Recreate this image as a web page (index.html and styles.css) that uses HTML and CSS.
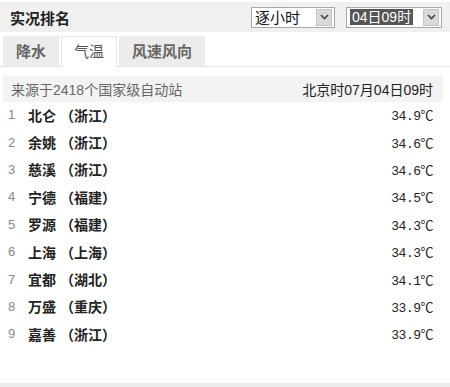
FILE: index.html
```html
<!DOCTYPE html>
<html lang="zh">
<head>
    <meta charset="UTF-8">
    <title>实况排名</title>
    <link rel="stylesheet" href="styles.css">
</head>
<body>
    <div class="rank">
        <div class="rankHead">
            <h3>实况排名</h3>
            <div class="selects">
                <div class="sel sel1"><span class="val">逐小时</span><span class="arrow"><svg width="9" height="6" viewBox="0 0 9 6"><path d="M1 1 L4.5 4.5 L8 1" fill="none" stroke="#444" stroke-width="1.6"/></svg></span></div>
                <div class="sel sel2"><span class="val"><em>04日09时</em></span><span class="arrow"><svg width="9" height="6" viewBox="0 0 9 6"><path d="M1 1 L4.5 4.5 L8 1" fill="none" stroke="#444" stroke-width="1.6"/></svg></span></div>
            </div>
        </div>
        <!-- 切换标签 -->
        <ul class="tabs">
            <li>降水</li>
            <li class="current">气温</li>
            <li>风速风向</li>
        </ul>
        <div class="source">
            <span>来源于2418个国家级自动站</span>
            <b>北京时07月04日09时</b>
        </div>
        <ol class="list">
            <li><i>1</i><span class="name">北仑 （浙江）</span><span class="num">34.9℃</span></li>
            <li><i>2</i><span class="name">余姚 （浙江）</span><span class="num">34.6℃</span></li>
            <li><i>3</i><span class="name">慈溪 （浙江）</span><span class="num">34.6℃</span></li>
            <li><i>4</i><span class="name">宁德 （福建）</span><span class="num">34.5℃</span></li>
            <li><i>5</i><span class="name">罗源 （福建）</span><span class="num">34.3℃</span></li>
            <li><i>6</i><span class="name">上海 （上海）</span><span class="num">34.3℃</span></li>
            <li><i>7</i><span class="name">宜都 （湖北）</span><span class="num">34.1℃</span></li>
            <li><i>8</i><span class="name">万盛 （重庆）</span><span class="num">33.9℃</span></li>
            <li><i>9</i><span class="name">嘉善 （浙江）</span><span class="num">33.9℃</span></li>
        </ol>
        <div class="foot"></div>
    </div>
</body>
</html>
```

FILE: styles.css
```css
*{
    margin:0;
    padding:0;
}
body{
    font-family:"Liberation Sans","Noto Sans CJK SC",sans-serif;
    font-size:13px;
    color:#222;
    background:#fff;
}
.rank{
    width:450px;
    height:387px;
    display:flex;
    flex-direction:column;
}
.rankHead{
    height:30px;
    margin-top:2px;
    background:#f0f0f0;
    display:flex;
    align-items:center;
    justify-content:space-between;
    padding:0 8px 0 10px;
}
.rankHead h3{
    font-size:15px;
    font-weight:bold;
    color:#222;
}
.selects{
    display:flex;
    gap:11px;
}
.sel{
    height:21px;
    border:1px solid #a8a8a8;
    background:#fff;
    display:flex;
    align-items:center;
    padding:0 2px 0 3px;
    box-sizing:border-box;
}
.sel1{
    width:84px;
}
.sel2{
    width:96px;
}
.sel .val{
    flex:1;
    font-size:15px;
    line-height:17px;
    color:#111;
}
.sel2 .val em{
    font-style:normal;
    font-size:14px;
    background:#555;
    color:#fff;
    padding:0 2px;
}
.sel .arrow{
    width:16px;
    height:17px;
    background:#d9d9d9;
    border:1px solid #c4c4c4;
    box-sizing:border-box;
    display:flex;
    align-items:center;
    justify-content:center;
}
.tabs{
    list-style:none;
    display:flex;
    gap:2px;
    margin-top:4px;
    padding-left:3px;
    border-bottom:1px solid #e4e4e4;
    height:30px;
}
.tabs li{
    background:#ececec;
    color:#666;
    font-size:15px;
    font-weight:bold;
    line-height:29px;
    padding:0 12px;
    height:30px;
    box-sizing:border-box;
    border:1px solid #ececec;
    border-bottom:none;
}
.tabs li.current{
    background:#fff;
    border-color:#e8e8e8;
    font-weight:normal;
    color:#555;
    height:31px;
}
.source{
    margin:9px 7px 0 3px;
    height:26px;
    background:#f3f3f3;
    display:flex;
    align-items:center;
    justify-content:space-between;
    padding:0 10px 0 8px;
    font-size:14px;
}
.source span{
    color:#666;
}
.source b{
    font-weight:normal;
    color:#222;
}
.list{
    list-style:none;
    margin:-1px 17px 0 8px;
}
.list li{
    height:27.4px;
    display:flex;
    align-items:center;
}
.list li i{
    font-style:normal;
    color:#888;
    width:20px;
}
.list li .name{
    flex:1;
    font-weight:bold;
    color:#222;
    font-size:14px;
    white-space:pre;
}
.list li .num{
    font-family:"Liberation Mono","Noto Sans CJK SC",monospace;
    font-size:13px;
    letter-spacing:-0.5px;
}
.foot{
    margin-top:auto;
    height:4px;
    background:#ececec;
}
```
